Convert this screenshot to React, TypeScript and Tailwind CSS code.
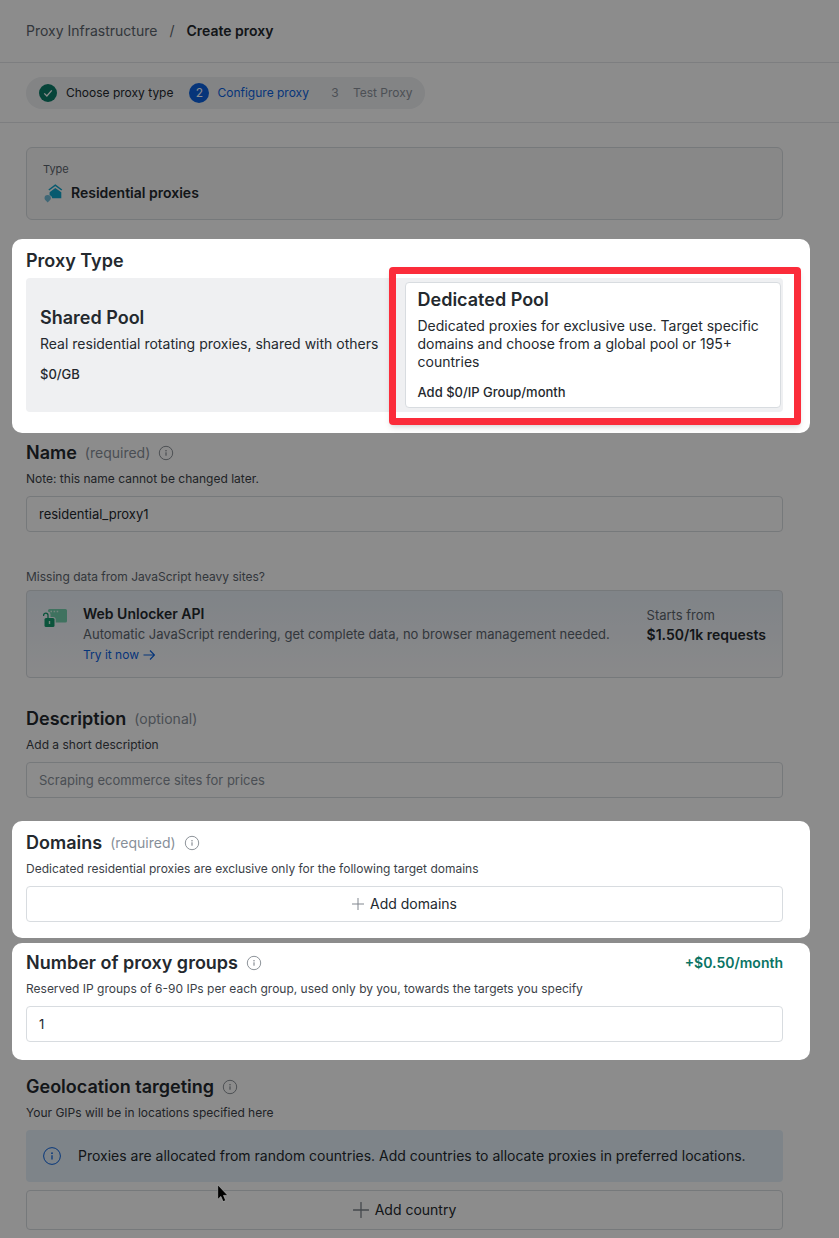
import type { ReactNode } from 'react';
import { useState } from 'react';

function InfoIcon({ className }: { className: string }) {
  return (
    <svg viewBox="0 0 16 16" className={className} fill="none" stroke="currentColor" aria-hidden="true">
      <circle cx="8" cy="8" r="6.7" strokeWidth="0.8" />
      <circle cx="8" cy="5.7" r="0.7" fill="currentColor" stroke="none" />
      <path d="M8 7.3v3.4" strokeWidth="1" />
    </svg>
  );
}

function PlusIcon({ className }: { className: string }) {
  return (
    <svg viewBox="0 0 16 16" className={className} fill="none" stroke="currentColor" aria-hidden="true">
      <path d="M8 .5v15M.5 8h15" strokeWidth="1.3" strokeLinecap="round" />
    </svg>
  );
}

function HouseIcon() {
  return (
    <svg viewBox="0 0 20 20" className="h-5 w-5" aria-hidden="true">
      <path d="m12.300 5 6 4.300V15.200H9.300a4 4 0 0 0-2.700-3.200V9.300Z" fill="#10a5cb" />
      <path d="m5.800 7 6.500-4.800L18.800 7" fill="none" stroke="#10a5cb" strokeWidth="1.500" />
      <path d="M4.700 12a3.200 3.200 0 0 1 3.200 3.200c0 1.800-2.200 2.600-3.200 4.300-1-1.700-3.200-2.500-3.200-4.300A3.200 3.200 0 0 1 4.700 12Z" fill="#73bcd7" />
    </svg>
  );
}

function UnlockerIcon() {
  return (
    <svg viewBox="0 0 24 20" className="h-5 w-6" aria-hidden="true">
      <path d="M6.500 1h16A1.500 1.500 0 0 1 24 2.500v10.500a1.500 1.500 0 0 1-1.500 1.500H12.700v-3a2.500 2.500 0 0 0-2.500-2.500H7.500V6.500a3 3 0 0 0-2.500-3V2.500A1.500 1.500 0 0 1 6.500 1Z" fill="#73d0ae" />
      <path d="M7.500 2.800h1.500v1.500H7.500zM10.600 2.800h1.500v1.500h-1.500zM13.700 2.800h1.500v1.500h-1.500z" fill="#d6f2e6" />
      <rect x="1.500" y="10" width="10" height="9" rx="1.500" fill="#159a6d" />
      <path d="M5 10.500V7.300a2.200 2.200 0 0 0-4.400 0v.7" fill="none" stroke="#159a6d" strokeWidth="1.300" />
      <path d="M5.800 13h1.400v3H5.800z" fill="#d6f2e6" />
    </svg>
  );
}

type FieldProps = {
  title: string;
  htmlFor?: string;
  hint?: string;
  note: string;
  info?: boolean;
  extra?: ReactNode;
  children: ReactNode;
};

function Field({ title, htmlFor, hint, note, info, extra, children }: FieldProps) {
  return (
    <div>
      <div className="flex h-6 items-center">
        <h2 className="text-lg font-semibold text-[#24292e]">
          <label htmlFor={htmlFor}>{title}</label>
        </h2>
        {hint && <span className="ml-2 text-sm text-[#878f99]">({hint})</span>}
        {info && <InfoIcon className="ml-2 h-4 w-4 text-[#70777f]" />}
        {extra}
      </div>
      <p className="mt-1 mb-[7px] text-xs leading-5 text-[#3b4147]">{note}</p>
      {children}
    </div>
  );
}

const inputClass =
  'block h-9 w-full rounded-sm border border-[#d8dce0] bg-white px-3 text-[13px] text-[#24292e] placeholder:text-[#878f99]';

export default function App() {
  const [pool, setPool] = useState('dedicated');
  const [name, setName] = useState('residential_proxy1');
  const [groups, setGroups] = useState('1');

  return (
    <div className="relative min-h-screen bg-white font-['Inter',sans-serif] text-[#24292e]">
      <header className="flex h-[63px] items-center border-b border-[#e4e6e9] px-[26px] text-sm">
        <a href="#proxies" className="text-[#5c646d]">Proxy Infrastructure</a>
        <span className="mx-3 text-[#5c646d]">/</span>
        <h1 className="font-semibold">Create proxy</h1>
      </header>

      <nav className="flex h-[60px] items-center border-b border-[#e4e6e9] px-[26px]">
        <ol className="flex h-8 items-center rounded-full bg-[#eef0f3] px-3 text-xs">
          <li className="flex items-center">
            <span className="mr-2 flex h-5 w-5 items-center justify-center">
              <span className="flex h-[18px] w-[18px] items-center justify-center rounded-full bg-[#0b7d69] text-white">
                <svg viewBox="0 0 16 16" className="h-3 w-3" fill="none" stroke="currentColor" aria-hidden="true">
                  <path d="m3 8.500 3.500 3.500L13 4.500" strokeWidth="1.800" />
                </svg>
              </span>
            </span>
            Choose proxy type
          </li>
          <li className="ml-4 flex items-center text-[#0b62df]">
            <span className="mr-2 flex h-5 w-5 items-center justify-center rounded-full bg-[#0b62df] text-white">2</span>
            Configure proxy
          </li>
          <li className="ml-4 flex items-center text-[#8c939b]">
            <span className="mr-2 flex h-5 w-5 items-center justify-center">3</span>
            Test Proxy
          </li>
        </ol>
      </nav>

      <main className="flex flex-col pt-6 pr-[29px] pb-2 pl-3">
        <div className="pr-[27px] pl-3.5">
          <div className="h-[73px] rounded-md border border-[#d8dce0] bg-[#f7f7f8] px-4 pt-3">
            <p className="text-[11px] leading-[18px] text-[#5c646d]">Type</p>
            <div className="mt-[5px] flex items-center gap-2 text-sm font-semibold">
              <HouseIcon />
              Residential proxies
            </div>
          </div>
        </div>

        <section className="relative z-20 mt-[19px] rounded-[10px] bg-white pt-2.5 pr-[27px] pb-[21px] pl-3.5">
          <h2 className="mb-[5px] text-lg leading-6 font-semibold">Proxy Type</h2>
          <div className="grid grid-cols-2 rounded-sm bg-[#eff0f2] px-0.5 py-1">
            <button
              type="button"
              aria-pressed={pool === 'shared'}
              onClick={() => setPool('shared')}
              className="flex flex-col justify-center px-3 text-left"
            >
              <span className="text-lg leading-6 font-semibold">Shared Pool</span>
              <span className="mt-[5px] text-sm leading-[18px] whitespace-nowrap">
                Real residential rotating proxies, shared with others
              </span>
              <span className="mt-[11px] text-[13px] leading-5 font-medium">$0/GB</span>
            </button>
            <div className="relative">
              <button
                type="button"
                aria-pressed={pool === 'dedicated'}
                onClick={() => setPool('dedicated')}
                className="flex w-full flex-col rounded-sm border border-[#d8dce0] bg-white px-3 py-[5px] text-left"
              >
                <span className="text-lg leading-6 font-semibold">Dedicated Pool</span>
                <span className="mt-[5px] text-sm leading-[18px]">
                  Dedicated proxies for exclusive use. Target specific domains and choose from a global pool or 195+
                  countries
                </span>
                <span className="mt-[11px] text-[13px] leading-5 font-medium">Add $0/IP Group/month</span>
              </button>
              <div className="pointer-events-none absolute -top-[15px] -right-5 -bottom-[17px] -left-4 rounded-sm border-7 border-[#fb2c3a] shadow-md" />
            </div>
          </div>
        </section>

        <div className="mt-2 pr-[27px] pl-3.5">
          <Field title="Name" htmlFor="name" hint="required" info note="Note: this name cannot be changed later.">
            <input id="name" type="text" className={inputClass} value={name} onChange={(e) => setName(e.target.value)} />
          </Field>

          <p className="mt-[35px] mb-[3px] text-xs leading-5 text-[#5c646d]">Missing data from JavaScript heavy sites?</p>
          <div className="flex h-[88px] rounded-sm border border-[#d8dce0] bg-linear-to-b from-[#e9f0f7] to-[#fafafc] px-4 pt-[13px]">
            <div className="mr-4 pt-1">
              <UnlockerIcon />
            </div>
            <div className="flex-1 text-[13px] leading-5">
              <h3 className="text-sm leading-5 font-semibold">Web Unlocker API</h3>
              <p className="text-[#5c646d]">
                Automatic JavaScript rendering, get complete data, no browser management needed.
              </p>
              <a href="#unlocker" className="mt-px flex items-center gap-1 text-xs leading-5 text-[#0b62df]">
                Try it now
                <svg viewBox="0 0 12 12" className="h-3 w-3" fill="none" stroke="currentColor" aria-hidden="true">
                  <path d="M.5 6h11M7 1.500 11.500 6 7 10.500" strokeWidth="1.200" />
                </svg>
              </a>
            </div>
            <div className="pt-px">
              <p className="text-[13px] leading-5 text-[#5c646d]">Starts from</p>
              <p className="text-sm leading-5 font-semibold">$1.50/1k requests</p>
            </div>
          </div>

          <div className="mt-[29px]">
            <Field title="Description" htmlFor="description" hint="optional" note="Add a short description">
              <input id="description" type="text" className={inputClass} placeholder="Scraping ecommerce sites for prices" />
            </Field>
          </div>
        </div>

        <section className="relative z-20 mt-[23px] rounded-[10px] bg-white pt-2.5 pr-[27px] pb-4 pl-3.5">
          <Field
            title="Domains"
            htmlFor="add-domains"
            hint="required"
            info
            note="Dedicated residential proxies are exclusive only for the following target domains"
          >
            <button
              id="add-domains"
              type="button"
              className="flex h-9 w-full items-center justify-center gap-1.5 rounded-sm border border-[#d8dce0] text-sm"
            >
              <PlusIcon className="h-3 w-3 text-[#7d848c]" />
              Add domains
            </button>
          </Field>
        </section>

        <section className="relative z-20 mt-[5px] rounded-[10px] bg-white pt-2 pr-[27px] pb-[18px] pl-3.5">
          <Field
            title="Number of proxy groups"
            htmlFor="groups"
            info
            note="Reserved IP groups of 6-90 IPs per each group, used only by you, towards the targets you specify"
            extra={<span className="ml-auto text-sm font-semibold text-[#0b7464]">+$0.50/month</span>}
          >
            <input id="groups" type="text" className={inputClass} value={groups} onChange={(e) => setGroups(e.target.value)} />
          </Field>
        </section>

        <div className="mt-[15px] pr-[27px] pl-3.5">
          <Field
            title="Geolocation targeting"
            htmlFor="add-country"
            info
            note="Your GIPs will be in locations specified here"
          >
            <div className="relative flex h-[52px] items-center rounded-sm bg-[#e6f1fa] px-4 text-sm">
              <InfoIcon className="mr-4 h-5 w-5 text-[#0b62df]" />
              Proxies are allocated from random countries. Add countries to allocate proxies in preferred locations.
              <svg viewBox="0 0 12 20" className="absolute top-[54px] left-[191px] z-20 h-5 w-3" aria-hidden="true">
                <path d="M.7.800v14.600l3.200-3 2.200 5.200 2.600-1.100-2.200-5.100h4.300Z" fill="#000" stroke="#bbb" strokeWidth=".6" />
              </svg>
            </div>
            <button
              id="add-country"
              type="button"
              className="mt-2 flex h-10 w-full items-center justify-center gap-1.5 rounded-sm border border-[#d8dce0] text-sm"
            >
              <PlusIcon className="h-4 w-4 text-[#7d848c]" />
              Add country
            </button>
          </Field>
        </div>
      </main>

      {/* dims everything except the highlighted sections */}
      <div className="pointer-events-none absolute inset-0 z-10 bg-black/45" />
    </div>
  );
}
